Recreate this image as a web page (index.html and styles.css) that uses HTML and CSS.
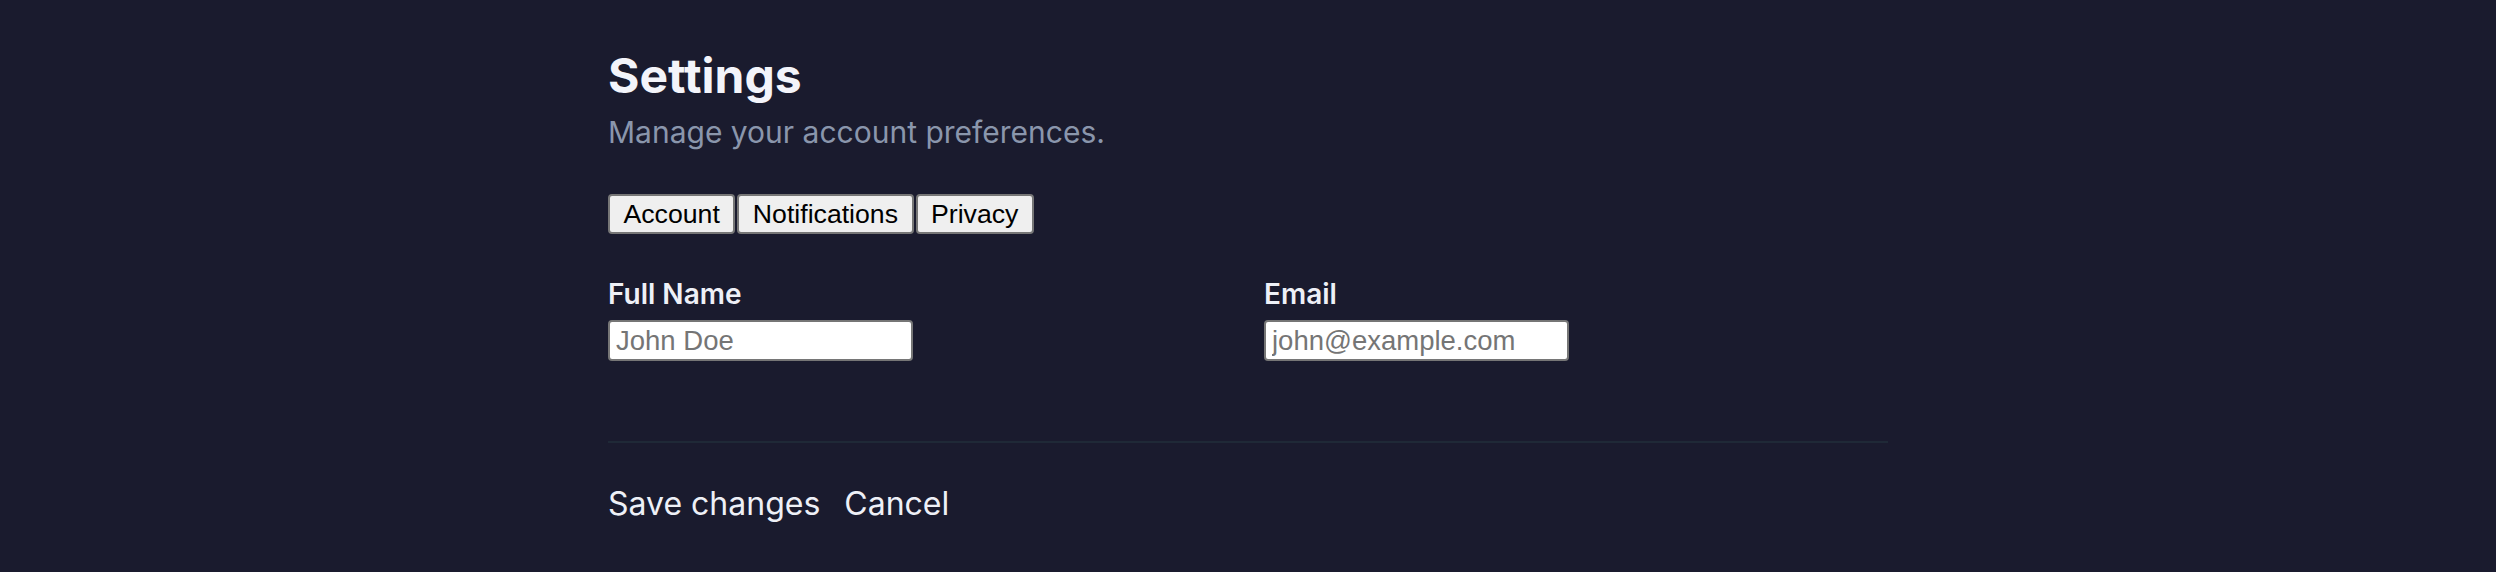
FILE: index.html
```html
<!DOCTYPE html>
<html lang="en">
<head>
<meta charset="utf-8">
<title>Settings</title>
<link rel="stylesheet" href="styles.css">
</head>
<body>
<main class="page">
  <header class="page-head">
    <h1 class="title">Settings</h1>
    <p class="subtitle">Manage your account preferences.</p>
  </header>
  <nav class="tabs">
    <button class="tab" type="button">Account</button>
    <button class="tab" type="button">Notifications</button>
    <button class="tab" type="button">Privacy</button>
  </nav>
  <form class="form">
    <div class="fields">
      <div class="field">
        <label class="label" for="name">Full Name</label>
        <input class="input" id="name" type="text" placeholder="John Doe">
      </div>
      <div class="field">
        <label class="label" for="email">Email</label>
        <input class="input" id="email" type="email" placeholder="john@example.com">
      </div>
    </div>
    <div class="actions">
      <button class="action" type="button">Save changes</button>
      <button class="action" type="button">Cancel</button>
    </div>
  </form>
</main>
</body>
</html>
```

FILE: styles.css
```css
html, body {
  margin: 0;
  padding: 0;
}

body {
  background: #1a1b2e;
  color: #eef0f7;
  font-family: Inter, "Noto Sans", sans-serif;
  min-height: 572px;
}

.page {
  max-width: 1280px;
  margin: 0 auto;
  padding-top: 48px;
}

.title {
  margin: 0;
  font-size: 48px;
  line-height: 56px;
  font-weight: 700;
  color: #f3f4fa;
}

.subtitle {
  margin: 8px 0 0;
  font-size: 30px;
  line-height: 40px;
  color: #8a96ac;
}

.tabs {
  display: flex;
  gap: 2px;
  margin-top: 42px;
}

.tab {
  box-sizing: border-box;
  height: 40px;
  font-family: "Liberation Sans", Arial, sans-serif;
  font-size: 26.67px;
  line-height: 32px;
  padding: 2px 13.5px;
  margin: 0;
  color: #000;
  background: #efefef;
  border: 2px solid #767676;
  border-radius: 4px;
}

.form {
  margin-top: 42px;
}

.fields {
  display: grid;
  grid-template-columns: 1fr 1fr;
  column-gap: 32px;
}

.field {
  display: flex;
  flex-direction: column;
  align-items: flex-start;
  gap: 8px;
}

.label {
  font-size: 28px;
  line-height: 36px;
  font-weight: 600;
  color: #eef0f7;
}

.input {
  box-sizing: border-box;
  width: 305px;
  height: 41px;
  margin: 0;
  padding: 2px 6px;
  font-family: "Liberation Sans", Arial, sans-serif;
  font-size: 27.5px;
  color: #000;
  background: #fff;
  border: 2px solid #767676;
  border-radius: 4px;
}

.input::placeholder {
  color: #757575;
}

.actions {
  display: flex;
  gap: 24px;
  margin-top: 80px;
  padding-top: 41px;
  border-top: 2px solid #1f2937;
}

.action {
  margin: 0;
  padding: 0;
  background: none;
  border: 0;
  font-family: Inter, "Noto Sans", sans-serif;
  font-size: 32px;
  line-height: 40px;
  color: #eef0f7;
}
```
